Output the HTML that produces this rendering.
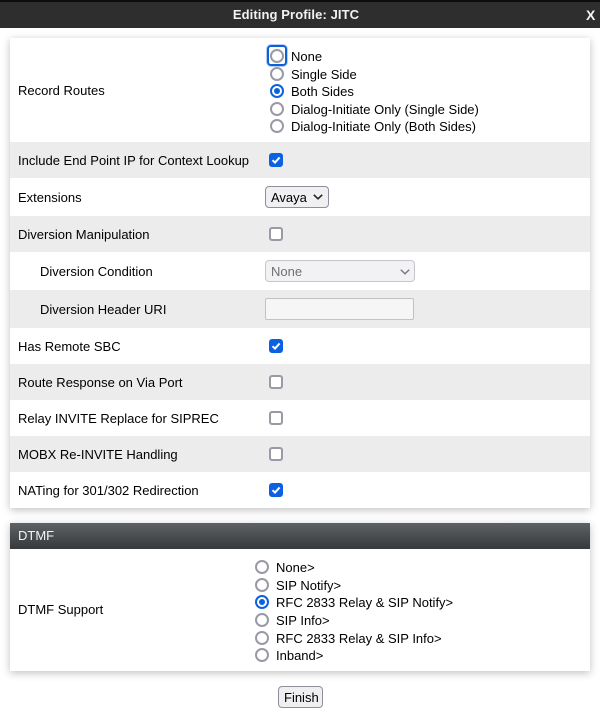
<!DOCTYPE html>
<html><head><meta charset="utf-8"><style>
html,body{margin:0;padding:0;background:#fff}
body{width:600px;height:723px;position:relative;overflow:hidden;font-family:"Liberation Sans",Arial,sans-serif;font-size:13px;color:#000}
div,span{position:absolute;box-sizing:border-box}
.t,.u{white-space:nowrap;line-height:16px;height:16px}
.panel{left:10px;width:580px;background:#fff;box-shadow:0 2px 8px rgba(0,0,0,.25)}
.row{left:10px;width:580px}
.g{background:#ececec}
.r{width:14px;height:14px;border:2px solid #9a99a6;border-radius:50%;background:#fff}
.r.on{border-color:#0b62e0}
.r.on:after{content:"";position:absolute;left:2px;top:2px;width:6px;height:6px;border-radius:50%;background:#0b62e0}
.c{left:269px;width:14px;height:14px;border:2px solid #9a99a6;border-radius:3px;background:#fff}
.c.on{background:#0b62e0;border-color:#0b62e0}
</style></head><body>
<div style="left:0;top:0;width:600px;height:28px;background:#2e2e2e;border-top:2px solid #0c0c0c"></div>
<div style="left:0;top:7px;width:592px;text-align:center;color:#f2f2f2;font-weight:bold;font-size:13px;line-height:16px;letter-spacing:.1px">Editing Profile: JITC</div>
<div style="left:586px;top:7px;color:#f5f5f5;font-weight:bold;font-size:14px;line-height:16px">X</div>

<div class="panel" style="top:38px;height:470px"></div>
<div class="row g" style="top:142px;height:36px"></div>
<div class="row g" style="top:216px;height:36px"></div>
<div class="row g" style="top:290px;height:38px"></div>
<div class="row g" style="top:364px;height:36px"></div>
<div class="row g" style="top:436px;height:36px"></div>

<div class="t" style="left:18px;top:83px">Record Routes</div>
<div class="t" style="left:18px;top:153px">Include End Point IP for Context Lookup</div>
<div class="t" style="left:18px;top:190px">Extensions</div>
<div class="t" style="left:18px;top:227px">Diversion Manipulation</div>
<div class="t" style="left:40px;top:264px">Diversion Condition</div>
<div class="t" style="left:40px;top:302px">Diversion Header URI</div>
<div class="t" style="left:18px;top:339px">Has Remote SBC</div>
<div class="t" style="left:18px;top:375px">Route Response on Via Port</div>
<div class="t" style="left:18px;top:411px">Relay INVITE Replace for SIPREC</div>
<div class="t" style="left:18px;top:447px">MOBX Re-INVITE Handling</div>
<div class="t" style="left:18px;top:483px">NATing for 301/302 Redirection</div>

<div style="left:266px;top:44px;width:22px;height:23px;border-radius:5px;border:1px solid #b9cdf3"></div>
<div style="left:267px;top:45px;width:20px;height:21px;border-radius:4px;border:2px solid #0b62d8"></div>
<div class="r" style="left:270px;top:49px"></div>
<div class="r" style="left:270px;top:67px"></div>
<div class="r on" style="left:270px;top:84px"></div>
<div class="r" style="left:270px;top:102px"></div>
<div class="r" style="left:270px;top:119px"></div>
<div class="t" style="left:291px;top:49px">None</div>
<div class="t" style="left:291px;top:67px">Single Side</div>
<div class="t" style="left:291px;top:84px">Both Sides</div>
<div class="t" style="left:291px;top:102px">Dialog-Initiate Only (Single Side)</div>
<div class="t" style="left:291px;top:119px">Dialog-Initiate Only (Both Sides)</div>

<div class="c on" style="top:153px"><svg width="10" height="10" style="position:absolute;left:0;top:0"><path d="M1.5 5.2L4 7.6L8.6 2.4" fill="none" stroke="#fff" stroke-width="2"/></svg></div>

<div style="left:265px;top:186px;width:64px;height:22px;border:1px solid #8f8e9b;border-radius:4px;background:#f0f0f3"></div>
<div class="t" style="left:271px;top:190px">Avaya</div>
<svg width="12" height="8" style="position:absolute;left:312px;top:193px"><path d="M1.8 1.8L6 5.8L10.2 1.8" fill="none" stroke="#222" stroke-width="1.6"/></svg>

<div class="c" style="top:227px"></div>

<div style="left:265px;top:260px;width:150px;height:22px;border:1px solid #c6c5ce;border-radius:4px;background:#f2f2f5"></div>
<div class="t" style="left:271px;top:264px;color:#6f6f6f">None</div>
<svg width="12" height="8" style="position:absolute;left:399px;top:268px"><path d="M1.8 1.8L6 5.8L10.2 1.8" fill="none" stroke="#77777f" stroke-width="1.4"/></svg>

<div style="left:265px;top:298px;width:149px;height:22px;border:1px solid #c2c2c6;border-radius:2px;background:#f6f6f6"></div>

<div class="c on" style="top:339px"><svg width="10" height="10" style="position:absolute;left:0;top:0"><path d="M1.5 5.2L4 7.6L8.6 2.4" fill="none" stroke="#fff" stroke-width="2"/></svg></div>
<div class="c" style="top:375px"></div>
<div class="c" style="top:411px"></div>
<div class="c" style="top:447px"></div>
<div class="c on" style="top:483px"><svg width="10" height="10" style="position:absolute;left:0;top:0"><path d="M1.5 5.2L4 7.6L8.6 2.4" fill="none" stroke="#fff" stroke-width="2"/></svg></div>

<div class="panel" style="top:523px;height:148px"></div>
<div style="left:10px;top:523px;width:580px;height:26px;background:linear-gradient(#5f6265,#36393b)"></div>
<div style="left:18px;top:528px;color:#f4f4f4;line-height:16px;font-size:13px">DTMF</div>
<div class="u" style="left:18px;top:602px">DTMF Support</div>

<div class="r" style="left:255px;top:560px"></div>
<div class="r" style="left:255px;top:578px"></div>
<div class="r on" style="left:255px;top:595px"></div>
<div class="r" style="left:255px;top:613px"></div>
<div class="r" style="left:255px;top:631px"></div>
<div class="r" style="left:255px;top:648px"></div>
<div class="u" style="left:276px;top:560px">None&gt;</div>
<div class="u" style="left:276px;top:578px">SIP Notify&gt;</div>
<div class="u" style="left:276px;top:595px">RFC 2833 Relay &amp; SIP Notify&gt;</div>
<div class="u" style="left:276px;top:613px">SIP Info&gt;</div>
<div class="u" style="left:276px;top:631px">RFC 2833 Relay &amp; SIP Info&gt;</div>
<div class="u" style="left:276px;top:648px">Inband&gt;</div>

<div style="left:278px;top:686px;width:45px;height:22px;border:1px solid #8f8e9b;border-radius:4px;background:#efeff2"></div>
<div class="u" style="left:284px;top:690px">Finish</div>
</body></html>
